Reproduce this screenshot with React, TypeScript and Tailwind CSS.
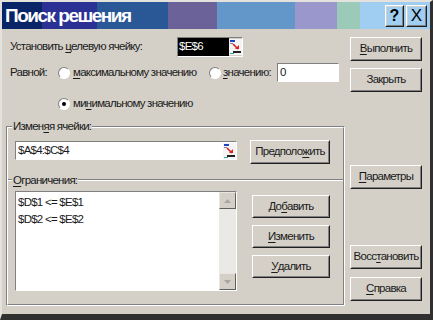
import React from "react";

const font = "font-['Liberation_Sans',Arial,sans-serif]";

const Btn = ({ children, className = "" }: { children: React.ReactNode; className?: string }) => (
  <div
    className={`border border-t-white border-l-white border-r-[#202020] border-b-[#202020] ${className}`}
  >
    <div className="flex h-full w-full items-center justify-center whitespace-nowrap border border-t-[#d4d0c8] border-l-[#d4d0c8] border-r-[#808080] border-b-[#808080] text-[11.5px] tracking-[-0.75px] text-[#1a1a1a]">
      {children}
    </div>
  </div>
);

const Radio = ({ checked = false }: { checked?: boolean }) => (
  <span className="flex h-[12px] w-[12px] shrink-0 items-center justify-center rounded-full border border-t-[#808080] border-l-[#808080] border-r-white border-b-white bg-white">
    {checked && <span className="h-[4px] w-[4px] rounded-full bg-black" />}
  </span>
);

const RefIcon = () => (
  <svg width="13" height="16" viewBox="0 0 13 16" className="shrink-0">
    <rect x="0" y="0" width="13" height="16" fill="#f4f4f4" />
    <rect x="1" y="1" width="5" height="2" fill="#2040c0" />
    <rect x="1" y="4" width="3" height="1" fill="#8080a0" />
    <path d="M4 5 L9 10" stroke="#e02020" strokeWidth="1.6" />
    <path d="M6 10 L10 10 L10 6 Z" fill="#e02020" />
    <rect x="4" y="12" width="8" height="2" fill="#202020" />
    <rect x="1" y="14" width="4" height="1" fill="#40a0a0" />
  </svg>
);

const Arrow = ({ up }: { up?: boolean }) => (
  <div className="flex h-[17px] w-[17px] items-center justify-center border border-t-[#e8e6e0] border-l-[#e8e6e0] border-r-[#606060] border-b-[#606060] bg-[#d4d0c8]">
    <svg width="7" height="4" viewBox="0 0 7 4">
      <path d={up ? "M0 4 L3.5 0 L7 4 Z" : "M0 0 L3.5 4 L7 0 Z"} fill="#a8a6a0" />
    </svg>
  </div>
);

const U = ({ children }: { children: React.ReactNode }) => <span className="underline underline-offset-2">{children}</span>;

export default function App() {
  return (
    <div
      className={`flex h-[320px] w-[433px] flex-col border-t-2 border-l-2 border-r-[3px] border-b-[6px] border-t-[#e4e2dc] border-l-[#e4e2dc] border-r-[#303030] border-b-[#303030] bg-[#d4d0c8] ${font}`}
    >
      {/* title bar */}
      <div className="flex h-[27px] shrink-0 items-center bg-[linear-gradient(90deg,#0a2468_0px,#0a2468_40px,#2b3094_40px,#2b3094_95px,#2a5796_95px,#2a5796_166px,#6a6299_166px,#6a6299_215px,#6497c9_215px,#6497c9_293px,#9a97cd_293px,#9a97cd_335px,#9ccab9_335px,#9ccab9_358px,#a0cdf2_358px)] pl-[3px] pr-[3px]">
        <span className="flex-1 text-[19px] font-bold leading-none tracking-[-1.5px] text-white">Поиск решения</span>
        <Btn className="h-[22px] w-[19px]">
          <span className="text-[16px] font-bold tracking-normal text-black">?</span>
        </Btn>
        <Btn className="ml-[2px] h-[22px] w-[21px]">
          <span className="text-[17px] tracking-normal text-black">X</span>
        </Btn>
      </div>

      <div className="flex flex-1">
        {/* left side */}
        <div className="flex w-[343px] flex-col whitespace-nowrap text-[11.5px] tracking-[-0.75px] text-[#1a1a1a]">
          <div className="mt-[8px] flex h-[20px] items-center pl-[8px]">
            <span className="w-[167px]">
              Установить <U>ц</U>елевую ячейку:
            </span>
            <div className="flex h-[20px] w-[66px] items-center border border-t-[#808080] border-l-[#808080] border-r-white border-b-white">
              <div className="flex h-full flex-1 items-center bg-black pl-[1px] text-white">$E$6</div>
              <RefIcon />
            </div>
          </div>

          <div className="mt-[6px] flex h-[19px] items-center pl-[8px]">
            <span className="w-[48px]">Равной:</span>
            <Radio />
            <span className="ml-[3px] w-[136px]">
              <U>м</U>аксимальному значению
            </span>
            <Radio />
            <span className="ml-[2px] w-[54px]">
              <U>з</U>начению:
            </span>
            <div className="flex h-[19px] w-[62px] items-center border border-t-[#808080] border-l-[#808080] border-r-white border-b-white bg-white pl-[2px]">
              0
            </div>
          </div>

          <div className="mt-[14px] flex h-[15px] items-center pl-[56px]">
            <Radio checked />
            <span className="ml-[3px]">
              ми<U>н</U>имальному значению
            </span>
          </div>

          {/* group box */}
          <div className="mt-[15px] ml-[4px] h-[180px] border border-t-[#808080] border-l-[#808080] border-r-white border-b-white">
            <div className="flex h-full flex-col border border-t-white border-l-white border-r-[#808080] border-b-[#808080]">
              <span className="-mt-[9px] ml-[4px] w-fit bg-[#d4d0c8] px-[1px] leading-[15px]">
                Измен<U>я</U>я ячейки:
              </span>
              <div className="mt-[6px] flex items-start pl-[7px]">
                <div className="mt-[1px] flex h-[19px] w-[222px] items-center border border-t-[#808080] border-l-[#808080] border-r-white border-b-white bg-white pl-[2px]">
                  <span className="flex-1">$A$4:$C$4</span>
                  <RefIcon />
                </div>
                <Btn className="ml-[13px] h-[24px] w-[80px]">
                  Предполо<U>ж</U>ить
                </Btn>
              </div>

              <div className="mt-[15px] h-[2px] border-t border-b border-t-[#808080] border-b-white" />
              <span className="-mt-[8px] ml-[4px] w-fit bg-[#d4d0c8] px-[1px] leading-[15px]">
                <U>О</U>граничения:
              </span>
              <div className="mt-[2px] flex items-start pl-[7px]">
                <div className="mt-[1px] flex h-[100px] w-[222px] border border-t-[#808080] border-l-[#808080] border-r-white border-b-white bg-white">
                  <div className="flex flex-1 flex-col pl-[2px] pt-[2px] leading-[17px]">
                    <span>$D$1 &lt;= $E$1</span>
                    <span>$D$2 &lt;= $E$2</span>
                  </div>
                  <div className="flex w-[17px] flex-col justify-between bg-[#ebe9e5]">
                    <Arrow up />
                    <Arrow />
                  </div>
                </div>
                <div className="ml-[15px] mt-[5px] flex flex-col gap-[7px]">
                  <Btn className="h-[23px] w-[78px]">
                    До<U>б</U>авить
                  </Btn>
                  <Btn className="h-[23px] w-[78px]">
                    <U>И</U>зменить
                  </Btn>
                  <Btn className="h-[23px] w-[78px]">
                    <U>У</U>далить
                  </Btn>
                </div>
              </div>
            </div>
          </div>
        </div>

        {/* right side */}
        <div className="ml-[5px] flex w-[72px] flex-col">
          <Btn className="mt-[8px] h-[24px] w-[72px]">
            <U>В</U>ыполнить
          </Btn>
          <Btn className="mt-[7px] h-[24px] w-[72px]">Закрыть</Btn>
          <Btn className="mt-[73px] h-[24px] w-[72px]">
            <U>П</U>араметры
          </Btn>
          <Btn className="mt-[56px] h-[24px] w-[72px]">
            Восс<U>т</U>ановить
          </Btn>
          <Btn className="mt-[8px] h-[24px] w-[72px]">
            <U>С</U>правка
          </Btn>
        </div>
      </div>
    </div>
  );
}
